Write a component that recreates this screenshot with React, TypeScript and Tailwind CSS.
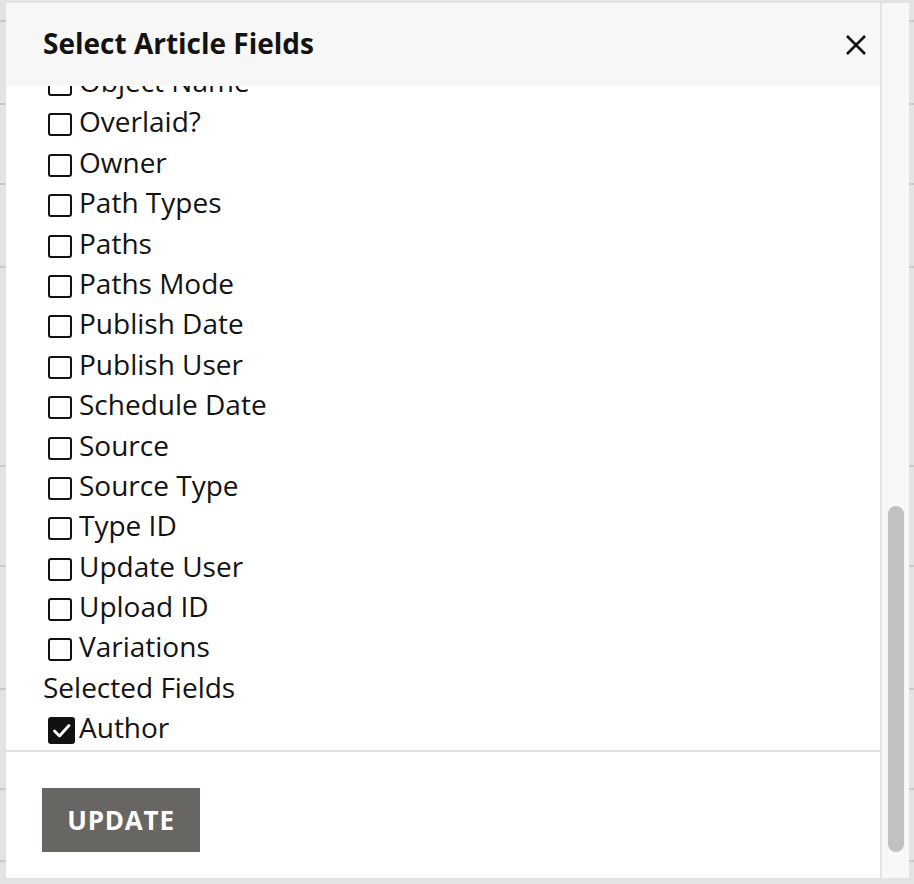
import React from 'react'

const fields = [
  'Object Name',
  'Overlaid?',
  'Owner',
  'Path Types',
  'Paths',
  'Paths Mode',
  'Publish Date',
  'Publish User',
  'Schedule Date',
  'Source',
  'Source Type',
  'Type ID',
  'Update User',
  'Upload ID',
  'Variations',
]

const bgLines = [22, 83, 80, 83, 199, 100, 123, 100, 72]

const FieldRow: React.FC<{ label: string; checked?: boolean }> = ({ label, checked }) => (
  <label className="flex items-start h-[40.4px] leading-[40.4px] pl-[42px] cursor-pointer">
    {checked ? (
      <span className="mt-[10px] w-[27px] h-[27px] rounded-[3px] bg-[#111] flex items-center justify-center shrink-0">
        <svg width="21" height="21" viewBox="0 0 21 21" fill="none">
          <path d="M3.5 11l5 5L18 5.5" stroke="#fff" strokeWidth="2.8" strokeLinecap="round" strokeLinejoin="round" />
        </svg>
      </span>
    ) : (
      <span className="mt-[12px] w-[24px] h-[23px] rounded-[3px] border-2 border-[#111] bg-white shrink-0" />
    )}
    <span className={checked ? 'ml-[4px]' : 'ml-[7px]'}>{label}</span>
  </label>
)

export default function App() {
  return (
    <div className="relative w-[914px] h-[884px] overflow-hidden bg-[#e3e3e3] font-['Open_Sans',sans-serif]">
      {/* page behind the overlay */}
      <div className="flex flex-col">
        {bgLines.map((h, i) => (
          <div key={i} style={{ height: h }} className="border-b-2 border-[#c9c9c9]" />
        ))}
      </div>

      {/* dialog */}
      <div className="absolute left-[6px] top-[3px] w-[903px] h-[875px] flex bg-white">
        <div className="flex flex-col w-[874px] h-full text-[#131313]">
          <div className="h-[83px] shrink-0 bg-[#f7f7f7] flex items-center justify-between pl-[37px] pr-[10px] relative z-10">
            <h2 className="text-[28px] font-bold leading-none pb-[3px]">Select Article Fields</h2>
            <button className="w-[28px] h-[28px] flex items-center justify-center">
              <svg width="22" height="22" viewBox="0 0 22 22" fill="none">
                <path d="M2 2l18 18M20 2L2 20" stroke="#111" strokeWidth="2.6" />
              </svg>
            </button>
          </div>

          <div className="h-[664px] shrink-0 overflow-hidden text-[28px]">
            <div className="mt-[-25px]">
              {fields.map((f) => (
                <FieldRow key={f} label={f} />
              ))}
              <div className="h-[40.4px] leading-[40.4px] pl-[37px]">Selected Fields</div>
              <FieldRow label="Author" checked />
            </div>
          </div>

          <div className="flex-1 border-t-2 border-[#e2e2e2] pl-[36px] pt-[36px]">
            <button className="w-[158px] h-[64px] bg-[#676662] text-white text-[26px] font-bold tracking-[0.8px]">
              UPDATE
            </button>
          </div>
        </div>

        {/* scrollbar */}
        <div className="w-[29px] h-full border-l-2 border-[#e4e4e4] bg-[#f8f8f8] flex flex-col justify-end pl-[6px] pb-[26px]">
          <div className="w-[16px] h-[346px] rounded-full bg-[#c1c1c1]" />
        </div>
      </div>
    </div>
  )
}
